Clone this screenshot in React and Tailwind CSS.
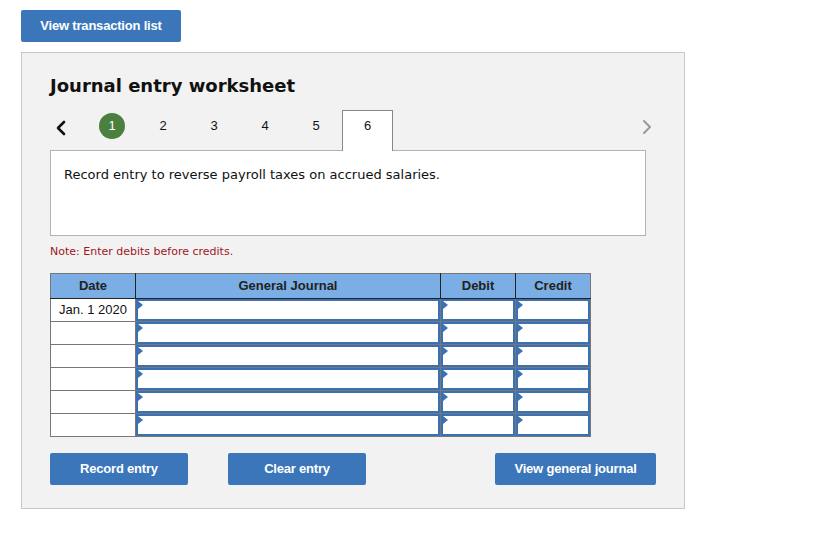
import { ChevronLeft, ChevronRight } from 'lucide-react'

const rows = ['Jan. 1 2020', '', '', '', '', '']

const InputCell = () => (
  <td className="border border-[#777] p-0 h-[23px]">
    <div className="relative h-full w-full border-2 border-[#3b70b3] bg-white">
      <span className="absolute left-0 top-0 h-0 w-0 border-y-[4px] border-l-[5px] border-y-transparent border-l-[#3b70b3]" />
    </div>
  </td>
)

const BlueButton = ({ children, className }) => (
  <button className={`h-8 shrink-0 rounded-[2px] bg-[#3b76bb] text-[13px] font-bold tracking-[-0.2px] text-white ${className}`}>
    {children}
  </button>
)

export default function App() {
  return (
    <div className="min-h-[534px] bg-white px-[21px] pt-[10px] font-['Liberation_Sans',Arial,sans-serif]">
      <BlueButton className="w-[160px]">View transaction list</BlueButton>

      <div className="mt-[10px] w-[664px] h-[457px] border border-[#c8c8c8] bg-[#f2f2f2] pl-[28px] pr-[39px] pt-[21px]">
        <h1 className="font-['DejaVu_Sans',Verdana,sans-serif] text-[18px] font-bold text-[#111] leading-[24px]">
          Journal entry worksheet
        </h1>

        <div className="mt-[12px] flex h-[40px] items-start">
          <ChevronLeft className="mt-[6px] ml-[-1px] h-6 w-6 text-[#111]" strokeWidth={2.6} />
          <div className="ml-[26px] mt-[3px] flex h-[26px] w-[26px] items-center justify-center rounded-full bg-[#4a7f3d] text-[13px] text-white">
            1
          </div>
          {['2', '3', '4', '5'].map((n) => (
            <div key={n} className="ml-[25px] mt-[8px] w-[26px] text-center text-[13px] leading-[16px] text-[#111]">{n}</div>
          ))}
          <div className="relative z-10 ml-[13px] h-[41px] w-[51px] border border-b-0 border-[#888] bg-white pt-[7px] text-center text-[13px] leading-[16px] text-[#111]">
            6
          </div>
          <div className="flex-1" />
          <ChevronRight className="mt-[5px] mr-[-14px] h-6 w-6 text-[#999]" strokeWidth={2} />
        </div>

        <div className="h-[86px] w-[596px] border border-[#b3b3b3] bg-white px-[13px] pt-[14px] font-['DejaVu_Sans',Verdana,sans-serif] text-[13px] text-[#111]">
          Record entry to reverse payroll taxes on accrued salaries.
        </div>

        <p className="mt-[8px] font-['DejaVu_Sans',Verdana,sans-serif] text-[11px] text-[#a0151d]">
          Note: Enter debits before credits.
        </p>

        <table className="mt-[12px] w-[541px] table-fixed border-collapse border border-[#777] text-[13px]">
          <colgroup>
            <col className="w-[85px]" />
            <col className="w-[305px]" />
            <col className="w-[75px]" />
            <col className="w-[75px]" />
          </colgroup>
          <thead>
            <tr className="h-[25px] bg-[#7aaee4] text-[#222]">
              <th className="border-r border-b border-[#222] font-bold">Date</th>
              <th className="border-r border-b border-[#222] font-bold">General Journal</th>
              <th className="border-r border-b border-[#222] font-bold">Debit</th>
              <th className="border-b border-[#222] font-bold">Credit</th>
            </tr>
          </thead>
          <tbody>
            {rows.map((d, i) => (
              <tr key={i} className="bg-white">
                <td className="h-[23px] border border-[#777] text-center text-[13px] text-[#111]">{d}</td>
                <InputCell />
                <InputCell />
                <InputCell />
              </tr>
            ))}
          </tbody>
        </table>

        <div className="mt-[16px] flex">
          <BlueButton className="w-[138px]">Record entry</BlueButton>
          <BlueButton className="ml-[40px] w-[138px]">Clear entry</BlueButton>
          <BlueButton className="ml-[129px] w-[161px]">View general journal</BlueButton>
        </div>
      </div>
    </div>
  )
}
